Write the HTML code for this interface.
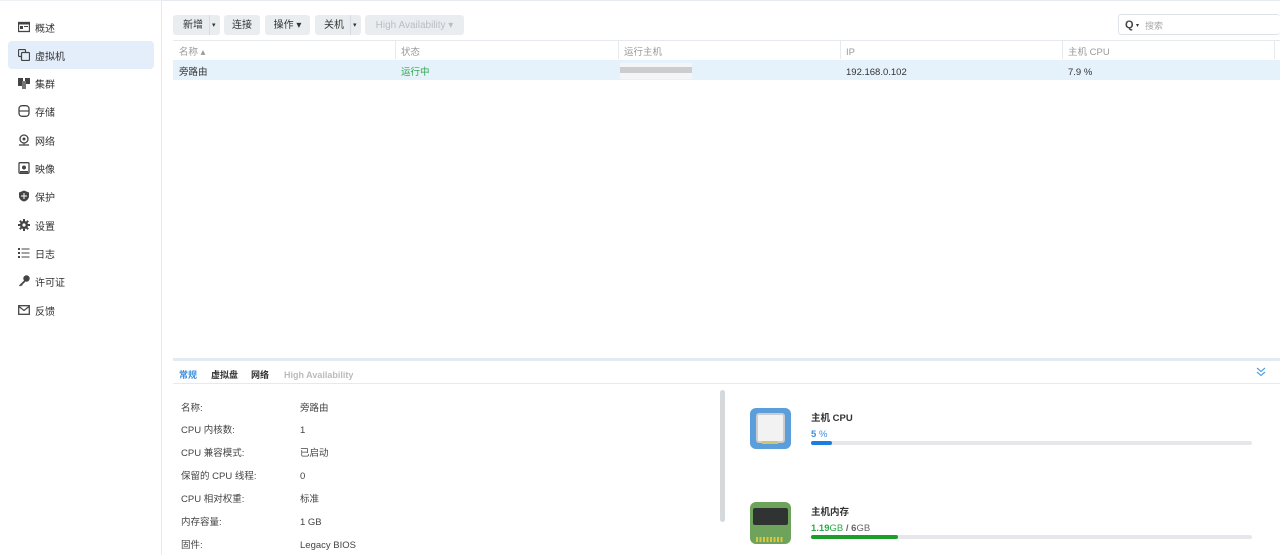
<!DOCTYPE html>
<html><head><meta charset="utf-8"><style>
*{box-sizing:border-box;margin:0;padding:0}
body{width:1280px;height:555px;overflow:hidden;background:#fff;font-family:"Liberation Sans","Noto Sans CJK SC",sans-serif;font-size:10px;line-height:18px;color:#333;position:relative}
.a{position:absolute}
.side{left:0;top:0;width:162px;height:555px;border-right:1px solid #e6eaef;border-top:1px solid #eef1f4}
.nav{position:absolute;left:8px;width:146px;height:28px;border-radius:4px;font-size:10px;color:#333}
.nav svg{position:absolute;left:10px;top:8px;width:12px;height:12px}
.nav span{position:absolute;left:27px;top:8px}
.btn{position:absolute;top:15px;height:20px;background:#eaedf0;border-radius:3px;font-size:10px;line-height:22px;color:#333;text-align:center}
.th{position:absolute;top:44px;color:#999;font-size:9.5px}
.tr{position:absolute;top:64px;font-size:9.5px}
.lab{position:absolute;left:181px;color:#444;font-size:9.5px}
.val{position:absolute;left:300px;color:#444;font-size:9.5px}
</style></head><body>
<div class="a" style="left:0;top:0;width:1280px;height:1px;background:#e6eaef"></div>
<div class="a side"></div>
<div class="nav" style="top:13px"><svg viewBox="0 0 12 12"><rect x="0.5" y="1.5" width="11" height="9" fill="none" stroke="#444" stroke-width="1.3"/><rect x="2" y="5" width="3" height="3" fill="#444"/><rect x="6" y="5" width="4" height="1" fill="#444"/><rect x="0.5" y="1.5" width="11" height="2" fill="#444"/></svg><span>概述</span></div>
<div class="nav" style="top:41px;background:#e3eefa"><svg viewBox="0 0 12 12"><rect x="0.5" y="0.5" width="7" height="7" rx="1" fill="none" stroke="#444" stroke-width="1.2"/><rect x="3.5" y="3.5" width="8" height="8" rx="1" fill="#e3eefa" stroke="#444" stroke-width="1.2"/></svg><span>虚拟机</span></div>
<div class="nav" style="top:69px"><svg viewBox="0 0 12 12"><rect x="0" y="1" width="5" height="8" fill="#444"/><rect x="7" y="1" width="5" height="6" fill="#444"/><rect x="4" y="4" width="4" height="8" fill="#777"/></svg><span>集群</span></div>
<div class="nav" style="top:97px"><svg viewBox="0 0 12 12"><rect x="1" y="0.7" width="10" height="10.6" rx="3" fill="none" stroke="#444" stroke-width="1.3"/><line x1="1" y1="6" x2="11" y2="6" stroke="#444" stroke-width="1.2"/></svg><span>存储</span></div>
<div class="nav" style="top:126px"><svg viewBox="0 0 12 12"><circle cx="6" cy="5" r="4" fill="none" stroke="#444" stroke-width="1.3"/><circle cx="6" cy="5" r="1.5" fill="#444"/><line x1="1" y1="11" x2="11" y2="11" stroke="#444" stroke-width="1.3"/><line x1="6" y1="9" x2="6" y2="11" stroke="#444"/></svg><span>网络</span></div>
<div class="nav" style="top:154px"><svg viewBox="0 0 12 12"><rect x="1" y="0.7" width="10" height="10.6" rx="1" fill="none" stroke="#444" stroke-width="1.3"/><circle cx="6" cy="5.5" r="2" fill="#444"/><rect x="2" y="9" width="8" height="1.5" fill="#444"/></svg><span>映像</span></div>
<div class="nav" style="top:182px"><svg viewBox="0 0 12 12"><path d="M6 0.5 L11 2.5 V6 C11 9 8.5 11 6 11.5 C3.5 11 1 9 1 6 V2.5Z" fill="#444"/><path d="M6 3 V9 M3 6 H9" stroke="#fff" stroke-width="1"/></svg><span>保护</span></div>
<div class="nav" style="top:211px"><svg viewBox="0 0 12 12"><circle cx="6" cy="6" r="4" fill="#444"/><g stroke="#444" stroke-width="2"><line x1="6" y1="0" x2="6" y2="12"/><line x1="0" y1="6" x2="12" y2="6"/><line x1="1.8" y1="1.8" x2="10.2" y2="10.2"/><line x1="10.2" y1="1.8" x2="1.8" y2="10.2"/></g><circle cx="6" cy="6" r="1.6" fill="#fff"/></svg><span>设置</span></div>
<div class="nav" style="top:239px"><svg viewBox="0 0 12 12"><g fill="#444"><rect x="0" y="1" width="2" height="2"/><rect x="0" y="5" width="2" height="2"/><rect x="0" y="9" width="2" height="2"/><rect x="3.5" y="1.5" width="8" height="1"/><rect x="3.5" y="5.5" width="8" height="1"/><rect x="3.5" y="9.5" width="8" height="1"/></g></svg><span>日志</span></div>
<div class="nav" style="top:267px"><svg viewBox="0 0 12 12"><circle cx="8.5" cy="3.5" r="3.2" fill="#444"/><path d="M6.5 5 L1 10.5 L2 11.5 L3 10.5 L4 11 L4.5 9.5 L7.5 6.5Z" fill="#444"/></svg><span>许可证</span></div>
<div class="nav" style="top:296px"><svg viewBox="0 0 12 12"><rect x="0.7" y="1.7" width="10.6" height="8.6" fill="none" stroke="#444" stroke-width="1.3"/><path d="M1 2.5 L6 6.5 L11 2.5" fill="none" stroke="#444" stroke-width="1.2"/></svg><span>反馈</span></div>

<div class="btn" style="left:173px;width:47px;text-align:left;padding-left:10px">新增<span class="a" style="left:36px;top:0;width:1px;height:20px;background:#d8dce0"></span><span class="a" style="left:39px;top:0;font-size:7px">▾</span></div>
<div class="btn" style="left:224px;width:36px">连接</div>
<div class="btn" style="left:265px;width:45px">操作 ▾</div>
<div class="btn" style="left:315px;width:46px;text-align:left;padding-left:9px">关机<span class="a" style="left:35px;top:0;width:1px;height:20px;background:#d8dce0"></span><span class="a" style="left:38px;top:0;font-size:7px">▾</span></div>
<div class="btn" style="left:365px;width:99px;color:#b8bec4">High Availability ▾</div>
<div class="a" style="left:1118px;top:14px;width:162px;height:21px;border:1px solid #dfe3e8;border-radius:3px;border-right:none;line-height:12px"><span class="a" style="left:6px;top:4px;font-size:11px;font-weight:bold;color:#444">Q</span><span class="a" style="left:17px;top:5px;font-size:6px">▾</span><span class="a" style="left:26px;top:5px;color:#aaa;font-size:9px">搜索</span></div>

<div class="a" style="left:173px;top:40px;width:1107px;height:1px;background:#e6eaef"></div>
<div class="th" style="left:179px">名称 ▴</div>
<div class="a" style="left:395px;top:41px;width:1px;height:18px;background:#e6eaef"></div>
<div class="th" style="left:401px">状态</div>
<div class="a" style="left:618px;top:41px;width:1px;height:18px;background:#e6eaef"></div>
<div class="th" style="left:624px">运行主机</div>
<div class="a" style="left:840px;top:41px;width:1px;height:18px;background:#e6eaef"></div>
<div class="th" style="left:846px">IP</div>
<div class="a" style="left:1062px;top:41px;width:1px;height:18px;background:#e6eaef"></div>
<div class="th" style="left:1068px">主机 CPU</div>
<div class="a" style="left:1274px;top:41px;width:1px;height:18px;background:#e6eaef"></div>
<div class="a" style="left:173px;top:60px;width:1107px;height:20px;background:#e5f1fb"></div>
<div class="tr" style="left:179px">旁路由</div>
<div class="tr" style="left:401px;color:#2ea94b">运行中</div>
<div class="a" style="left:620px;top:63px;width:72px;height:16px;background:#f3f5f7"></div>
<div class="a" style="left:620px;top:67px;width:72px;height:6px;background:#b9bcc0;opacity:.7"></div>
<div class="tr" style="left:846px">192.168.0.102</div>
<div class="tr" style="left:1068px">7.9 %</div>

<div class="a" style="left:173px;top:358px;width:1107px;height:3px;background:#e4eaf1"></div>
<div class="a" style="left:179px;top:366px;font-size:9px;font-weight:bold;color:#3b8ee0">常规</div>
<div class="a" style="left:211px;top:366px;font-size:9px;font-weight:bold;color:#333">虚拟盘</div>
<div class="a" style="left:251px;top:366px;font-size:9px;font-weight:bold;color:#333">网络</div>
<div class="a" style="left:284px;top:366px;font-size:9px;font-weight:bold;color:#bbb">High Availability</div>
<div class="a" style="left:173px;top:383px;width:1107px;height:1px;background:#e4eaf1"></div>
<svg class="a" style="left:1256px;top:367px" width="10" height="10" viewBox="0 0 10 10"><path d="M1 1 L5 4.5 L9 1 M1 5 L5 8.5 L9 5" fill="none" stroke="#5aa0e0" stroke-width="1.2"/></svg>

<div class="lab" style="top:400px">名称:</div><div class="val" style="top:400px">旁路由</div>
<div class="lab" style="top:422px">CPU 内核数:</div><div class="val" style="top:422px">1</div>
<div class="lab" style="top:445px">CPU 兼容模式:</div><div class="val" style="top:445px">已启动</div>
<div class="lab" style="top:468px">保留的 CPU 线程:</div><div class="val" style="top:468px">0</div>
<div class="lab" style="top:491px">CPU 相对权重:</div><div class="val" style="top:491px">标准</div>
<div class="lab" style="top:514px">内存容量:</div><div class="val" style="top:514px">1 GB</div>
<div class="lab" style="top:537px">固件:</div><div class="val" style="top:537px">Legacy BIOS</div>
<div class="a" style="left:720px;top:390px;width:5px;height:132px;border-radius:3px;background:#d6d9dc"></div>

<div class="a" style="left:750px;top:408px;width:41px;height:41px;border-radius:6px;background:#5a9fdc"></div>
<div class="a" style="left:756px;top:413px;width:29px;height:30px;border-radius:3px;background:#f2f2f2;border:2px solid #ccc"></div>
<div class="a" style="left:762px;top:441px;width:16px;height:3px;background:#cfc86a"></div>
<div class="a" style="left:811px;top:410px;font-size:9.5px;font-weight:bold;color:#333">主机 CPU</div>
<div class="a" style="left:811px;top:426px;font-size:9.5px;font-weight:bold;color:#3b8ee0">5 <span style="font-weight:normal">%</span></div>
<div class="a" style="left:811px;top:441px;width:441px;height:4px;border-radius:2px;background:#e5e7ea"><div style="width:21px;height:4px;border-radius:2px;background:#1a7de0"></div></div>

<div class="a" style="left:750px;top:502px;width:41px;height:42px;border-radius:6px;background:#6da35a"></div>
<div class="a" style="left:753px;top:508px;width:35px;height:17px;border-radius:2px;background:#2f3432"></div>
<div class="a" style="left:756px;top:537px;width:28px;height:5px;background:repeating-linear-gradient(90deg,#e2c53a 0 2px,transparent 2px 3.5px)"></div>
<div class="a" style="left:811px;top:504px;font-size:9.5px;font-weight:bold;color:#333">主机内存</div>
<div class="a" style="left:811px;top:520px;font-size:9.5px;color:#666"><b style="color:#2ea94b">1.19</b><span style="color:#2ea94b">GB</span> <b>/</b> <b>6</b>GB</div>
<div class="a" style="left:811px;top:535px;width:441px;height:4px;border-radius:2px;background:#e5e7ea"><div style="width:87px;height:4px;border-radius:2px;background:#1d9d2a"></div></div>
</body></html>
